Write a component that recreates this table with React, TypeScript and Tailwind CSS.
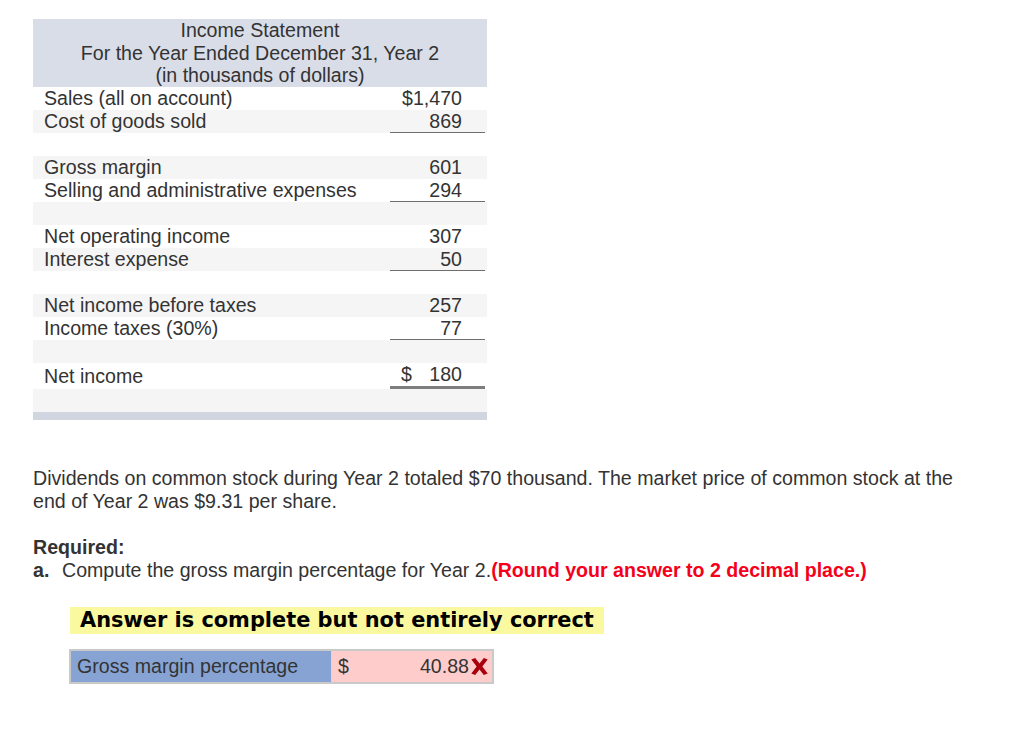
import React from "react";

type Row = { label?: string; amount?: React.ReactNode; bg: "w" | "g"; line?: "thin" | "thick"; h?: string };

const rows: Row[] = [
  { label: "Sales (all on account)", amount: "$1,470", bg: "w" },
  { label: "Cost of goods sold", amount: "869", bg: "g", line: "thin" },
  { bg: "w" },
  { label: "Gross margin", amount: "601", bg: "g" },
  { label: "Selling and administrative expenses", amount: "294", bg: "w", line: "thin" },
  { bg: "g" },
  { label: "Net operating income", amount: "307", bg: "w" },
  { label: "Interest expense", amount: "50", bg: "g", line: "thin" },
  { bg: "w" },
  { label: "Net income before taxes", amount: "257", bg: "g" },
  { label: "Income taxes (30%)", amount: "77", bg: "w", line: "thin" },
  { bg: "g" },
  {
    label: "Net income",
    amount: (
      <span className="flex w-full justify-between">
        <span>$</span>
        <span>180</span>
      </span>
    ),
    bg: "w",
    line: "thick",
    h: "h-[26px]",
  },
  { bg: "g", h: "h-[23px]" },
];

function XMark() {
  return (
    <svg width="21" height="21" viewBox="0 0 20 20" className="shrink-0">
      <path
        d="M2.2 3.4 L5.9 1.8 L10 7.1 L14.1 1.8 L17.8 3.4 L12.7 10 L17.8 16.6 L14.1 18.2 L10 12.9 L5.9 18.2 L2.2 16.6 L7.3 10 Z"
        fill="#a8000c"
      />
    </svg>
  );
}

export default function App() {
  return (
    <div
      className="min-h-[733px] w-[1024px] bg-white text-[#333] text-[19.6px]"
      style={{ fontFamily: '"Liberation Sans", Arial, Helvetica, sans-serif' }}
    >
      <div className="pl-[33px] pt-[19px]">
        {/* Income statement table */}
        <div className="w-[454px]">
          <div className="h-[68px] bg-[#d9dde8] text-center leading-[22.5px]">
            <div>Income Statement</div>
            <div>For the Year Ended December 31, Year 2</div>
            <div>(in thousands of dollars)</div>
          </div>
          {rows.map((r, i) => (
            <div
              key={i}
              className={`flex ${r.h ?? "h-[23px]"} ${r.bg === "g" ? "bg-[#f5f5f5]" : "bg-white"}`}
            >
              <div className="flex flex-1 items-center pl-[11px] leading-[23px]">{r.label ?? ""}</div>
              <div
                className={`mr-[2px] flex w-[95px] items-center justify-end pl-[11px] pr-[23px] leading-[23px] ${
                  r.line === "thin"
                    ? "border-b border-[#6e6e6e]"
                    : r.line === "thick"
                    ? "border-b-[3px] border-[#7d7d7d]"
                    : ""
                }`}
              >
                {r.amount ?? ""}
              </div>
            </div>
          ))}
          <div className="h-[8px] bg-[#d0d5e0]" />
        </div>

        {/* Paragraph */}
        <div className="mt-[47px] w-[940px] leading-[22.5px]">
          Dividends on common stock during Year 2 totaled $70 thousand. The market price of common stock at the end
          of Year 2 was $9.31 per share.
        </div>

        <div className="mt-[24px] leading-[23px]">
          <div className="font-bold">Required:</div>
          <div className="flex">
            <span className="inline-block w-[29px] font-bold">a.</span>
            <span>
              Compute the gross margin percentage for Year 2.
              <span className="font-bold text-[#f5001b]">(Round your answer to 2 decimal place.)</span>
            </span>
          </div>
        </div>

        {/* Answer banner */}
        <div className="ml-[37px] mt-[25px] flex h-[27px] w-[534px] items-center bg-[#fbf99f] pl-[10px]">
          <span
            className="text-[20.9px] font-bold text-black leading-none"
            style={{ fontFamily: '"DejaVu Sans", Verdana, sans-serif' }}
          >
            Answer is complete but not entirely correct
          </span>
        </div>

        {/* Answer table */}
        <div className="ml-[36px] mt-[15px] flex h-[35px] w-[425px] border-2 border-[#c9c9c9]">
          <div className="flex w-[261px] items-center border-r border-[#d8d8d8] bg-[#87a3d3] pl-[6px]">
            Gross margin percentage
          </div>
          <div className="flex flex-1 items-center bg-[#ffcccc] pl-[6px] pr-[2px]">
            <span>$</span>
            <span className="ml-auto">40.88</span>
            <XMark />
          </div>
        </div>
      </div>
    </div>
  );
}
